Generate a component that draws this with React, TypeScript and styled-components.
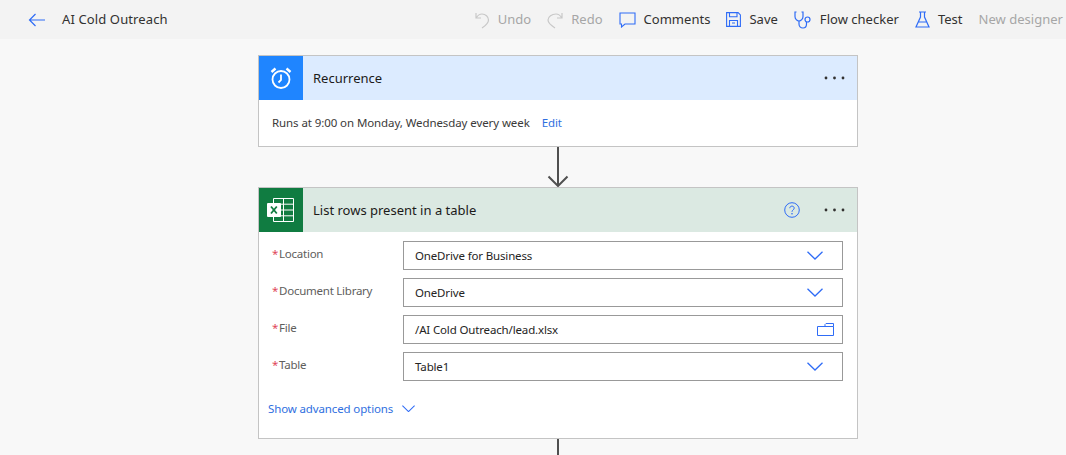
import styled, { createGlobalStyle } from 'styled-components';
import type { ReactNode } from 'react';

const GlobalStyle = createGlobalStyle`
  html, body {
    margin: 0;
    height: 100%;
    overflow: hidden;
    background-color: #f8f8f8;
  }
  body {
    font-family: "Noto Sans", "Open Sans", "Liberation Sans", sans-serif;
    color: #252423;
  }
`;

const Page = styled.div`
  width: 1066px;
  height: 455px;
  overflow: hidden;
  display: flex;
  flex-direction: column;
`;

const TopBar = styled.header`
  height: 39px;
  flex-shrink: 0;
  box-sizing: border-box;
  background-color: #f3f3f3;
  display: flex;
  align-items: center;
  padding: 0 3px 2px 28px;
`;

const BackButton = styled.div`
  display: flex;
  align-items: center;
  margin: 2px 16px 0 0;
`;

const FlowName = styled.div`
  font-size: 13px;
  letter-spacing: 0.12px;
  color: #323130;
`;

const Actions = styled.nav`
  margin-left: auto;
  display: flex;
  align-items: center;
  gap: 16px;
`;

const Action = styled.div<{ $disabled?: boolean }>`
  display: flex;
  align-items: center;
  gap: 8px;
  font-size: 13px;
  letter-spacing: 0.02px;
  white-space: nowrap;
  color: ${({ $disabled }) => ($disabled ? '#a6a6a6' : '#323130')};

  svg {
    margin-top: 2px;
  }
`;

const Canvas = styled.main`
  flex: 1;
  display: flex;
  flex-direction: column;
  align-items: center;
  padding: 16px 0 0 50px;
`;

const Card = styled.section`
  width: 600px;
  box-sizing: border-box;
  border: 1px solid #c4c4c4;
  background-color: #fff;
  flex-shrink: 0;
`;

const CardHeader = styled.div<{ $tint: string }>`
  height: 44px;
  display: flex;
  align-items: center;
  background-color: ${({ $tint }) => $tint};
`;

const IconBox = styled.div<{ $color: string }>`
  width: 44px;
  height: 44px;
  display: flex;
  align-items: center;
  justify-content: center;
  background-color: ${({ $color }) => $color};
`;

const CardTitle = styled.div`
  margin-left: 10px;
  font-size: 13px;
  color: #1b1a19;
  flex: 1;
`;

const HeaderTools = styled.div`
  display: flex;
  align-items: center;
  gap: 24px;
  margin-right: 12px;
`;

const SummaryRow = styled.div`
  height: 46px;
  padding: 0 0 2px 13px;
  box-sizing: border-box;
  display: flex;
  align-items: center;
  font-size: 11.5px;
  letter-spacing: -0.09px;
  color: #3b3a39;
`;

const EditLink = styled.span`
  margin-left: 12px;
  color: #2f6fe0;
`;

const Connector = styled.div`
  height: 40px;
  display: flex;
  flex-shrink: 0;
  justify-content: center;
`;

const TrailingLine = styled.div`
  width: 2px;
  height: 16px;
  flex-shrink: 0;
  background-color: #505050;
`;

const Form = styled.div`
  padding: 9px 14px 0 13px;
  height: 206px;
  box-sizing: border-box;
  display: flex;
  flex-direction: column;
  gap: 8px;
`;

const FieldRow = styled.div`
  display: flex;
  align-items: flex-start;
`;

const FieldLabel = styled.label`
  width: 131px;
  flex-shrink: 0;
  margin-top: 5px;
  font-size: 11.5px;
  letter-spacing: -0.25px;
  line-height: 16px;
  color: #605e5c;
`;

const Required = styled.span`
  color: #e0475a;
  margin-right: 1px;
`;

const FieldBox = styled.div`
  flex: 1;
  height: 29px;
  box-sizing: border-box;
  border: 1px solid #999;
  display: flex;
  align-items: center;
  justify-content: space-between;
  padding: 0 19px 0 11px;
  font-size: 11.5px;
  letter-spacing: -0.15px;
  color: #252423;
`;

const FileIcon = styled.span`
  display: flex;
  margin-right: -11px;
`;

const AdvancedToggle = styled.div`
  margin: 12px 0 0 -4px;
  display: flex;
  align-items: center;
  gap: 9px;
  font-size: 11.5px;
  letter-spacing: -0.13px;
  color: #2f6fe0;
`;

const BLUE = '#2f6cf6';

const BackIcon = () => (
  <svg width="18" height="14" viewBox="0 0 18 14" fill="none" stroke={BLUE} strokeWidth="1.2">
    <path d="M17 7H1.5M7.5 1 1.5 7l6 6" />
  </svg>
);

const UndoIcon = () => (
  <svg width="15" height="18" viewBox="0 0 15 18" fill="none" stroke="#c8c8c8" strokeWidth="1.2">
    <path d="M1 2v5h5M1.500 6.500C3 4 5 3 7 3c3.500 0 6.500 2.500 6.500 6 0 2.500-2 5-6.500 8" />
  </svg>
);

const RedoIcon = () => (
  <svg width="16" height="18" viewBox="0 0 16 18" fill="none" stroke="#c8c8c8" strokeWidth="1.2">
    <path d="M15 2v5h-5M14.500 6.500C13 4 11 3 9 3 5 3 1 5.500 1 9c0 2.500 2.500 5 7 8" />
  </svg>
);

const CommentIcon = () => (
  <svg width="17" height="16" viewBox="0 0 17 16" fill="none" stroke={BLUE} strokeWidth="1.1">
    <path d="M1 1h15v11H6l-3.500 3v-3H1z" />
  </svg>
);

const SaveIcon = () => (
  <svg width="15" height="15" viewBox="0 0 15 15" fill="none" stroke={BLUE} strokeWidth="1.1">
    <path d="M.6.6h11.500l2.300 2.300v11.500H.6zM3.500.6v4.200h7.500V.6M3.500 14.400V8.500h8v5.900M6 11h3" />
  </svg>
);

const StethoscopeIcon = () => (
  <svg width="18" height="18" viewBox="0 0 18 18" fill="none" stroke={BLUE} strokeWidth="1.2">
    <path d="M2.500 1H1v4.500C1 8 3 10 5 10s4-2 4-4.500V1H7.500" />
    <path d="M5 10v3c0 2 1.500 4 4 4s3.500-2 3.500-4v-2" />
    <circle cx="13.500" cy="8.500" r="2.500" />
  </svg>
);

const FlaskIcon = () => (
  <svg width="15" height="17" viewBox="0 0 15 17" fill="none" stroke={BLUE} strokeWidth="1.2">
    <path d="M4 1h7M5.500 1v5L1 16h13L9.500 6V1M3.500 11h8" />
  </svg>
);

const AlarmIcon = () => (
  <svg width="22" height="24" viewBox="0 0 22 24" fill="none" stroke="#fff" strokeWidth="1.800">
    <circle cx="11" cy="13.500" r="8.500" />
    <path d="M11 8.500V14l-2.500 2.500" />
    <path d="M1.500 6 5.500 2.500M20.500 6 16.500 2.500" strokeWidth="2.400" />
  </svg>
);

const ExcelIcon = () => (
  <svg width="28" height="26" viewBox="0 0 28 26" fill="none">
    <path d="M6.500 1.500h20v23h-20z" stroke="#fff" strokeWidth="1" />
    <path d="M16.500 1.500v23M6.500 7.200h20M6.500 13h20M6.500 18.800h20" stroke="#fff" strokeWidth="1" />
    <rect x="0" y="6" width="14" height="14" rx="1" fill="#fff" />
    <path d="M4 9.500 9.800 16.500M9.800 9.500 4 16.500" stroke="#107c41" strokeWidth="1.800" />
  </svg>
);

const MoreIcon = () => (
  <svg width="21" height="4" viewBox="0 0 21 4" fill="#323130">
    <circle cx="2" cy="2" r="1.400" />
    <circle cx="10.500" cy="2" r="1.400" />
    <circle cx="19" cy="2" r="1.400" />
  </svg>
);

const HelpIcon = () => (
  <svg width="16" height="16" viewBox="0 0 16 16" fill="none" stroke={BLUE} strokeWidth="1">
    <circle cx="8" cy="8" r="7.300" />
    <path d="M5.800 6.200C5.800 4.900 6.800 4.100 8 4.100s2.200.8 2.200 2c0 1.800-2.200 1.800-2.200 3.700" />
    <circle cx="8" cy="11.800" r=".4" />
  </svg>
);

const ChevronIcon = ({ size = 16 }: { size?: number }) => (
  <svg width={size} height={size / 2 + 1} viewBox="0 0 16 9" fill="none" stroke={BLUE} strokeWidth="1.300">
    <path d="M.5.8 8 8l7.500-7.200" />
  </svg>
);

const FolderIcon = () => (
  <svg width="17" height="13" viewBox="0 0 17 13" fill="none" stroke={BLUE} strokeWidth="1">
    <path d="M.5 3.500h16v9H.5zM8 3.500V1.500L9 .5h7.500v3" />
  </svg>
);

const ArrowDown = () => (
  <svg width="22" height="40" viewBox="0 0 22 40" fill="none" stroke="#505050" strokeWidth="2">
    <path d="M11 0v39M1.500 29.500 11 39l9.500-9.500" />
  </svg>
);

type Field = {
  label: string;
  value: string;
  icon: ReactNode;
};

const fields: Field[] = [
  { label: 'Location', value: 'OneDrive for Business', icon: <ChevronIcon /> },
  { label: 'Document Library', value: 'OneDrive', icon: <ChevronIcon /> },
  { label: 'File', value: '/AI Cold Outreach/lead.xlsx', icon: <FileIcon><FolderIcon /></FileIcon> },
  { label: 'Table', value: 'Table1', icon: <ChevronIcon /> },
];

const App = () => {
  return (
    <Page>
      <GlobalStyle />
      <TopBar>
        <BackButton><BackIcon /></BackButton>
        <FlowName>AI Cold Outreach</FlowName>
        <Actions>
          <Action $disabled><UndoIcon />Undo</Action>
          <Action $disabled><RedoIcon />Redo</Action>
          <Action><CommentIcon />Comments</Action>
          <Action><SaveIcon />Save</Action>
          <Action><StethoscopeIcon />Flow checker</Action>
          <Action><FlaskIcon />Test</Action>
          <Action $disabled>New designer</Action>
        </Actions>
      </TopBar>
      <Canvas>
        <Card>
          <CardHeader $tint="#dcebff">
            <IconBox $color="#1f85ff"><AlarmIcon /></IconBox>
            <CardTitle>Recurrence</CardTitle>
            <HeaderTools><MoreIcon /></HeaderTools>
          </CardHeader>
          <SummaryRow>
            Runs at 9:00 on Monday, Wednesday every week
            <EditLink>Edit</EditLink>
          </SummaryRow>
        </Card>
        <Connector><ArrowDown /></Connector>
        <Card>
          <CardHeader $tint="#dbe9e2">
            <IconBox $color="#107c41"><ExcelIcon /></IconBox>
            <CardTitle>List rows present in a table</CardTitle>
            <HeaderTools><HelpIcon /><MoreIcon /></HeaderTools>
          </CardHeader>
          <Form>
            {fields.map((field) => (
              <FieldRow key={field.label}>
                <FieldLabel><Required>*</Required>{field.label}</FieldLabel>
                <FieldBox>{field.value}{field.icon}</FieldBox>
              </FieldRow>
            ))}
            <AdvancedToggle>Show advanced options <ChevronIcon size={13} /></AdvancedToggle>
          </Form>
        </Card>
        <TrailingLine />
      </Canvas>
    </Page>
  );
};

export default App;
